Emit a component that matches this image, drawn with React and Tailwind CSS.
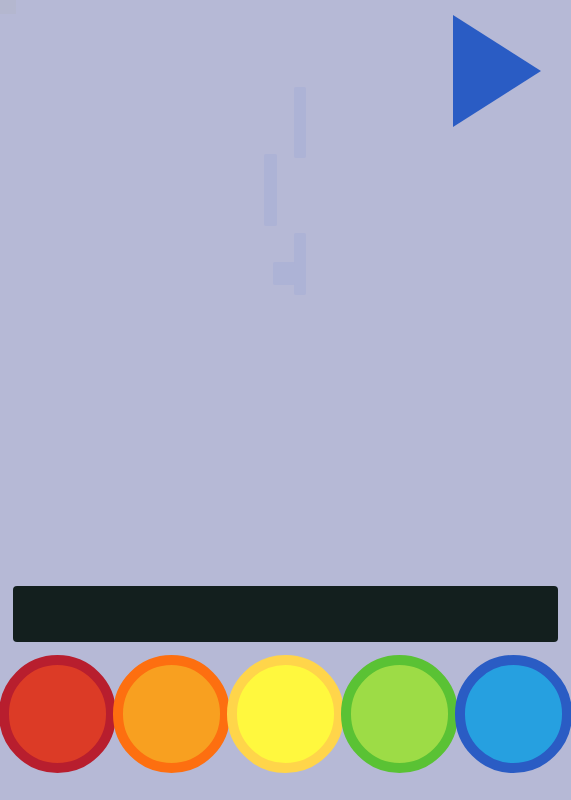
import React from "react";

const circles = [
  { border: "border-[#b81e2e]", fill: "bg-[#dc3b26]" },
  { border: "border-[#fd6f10]", fill: "bg-[#f8a020]" },
  { border: "border-[#ffd54a]", fill: "bg-[#fff83e]" },
  { border: "border-[#5ac234]", fill: "bg-[#9ddc46]" },
  { border: "border-[#2a5cc4]", fill: "bg-[#26a0e0]" },
];

export default function App() {
  return (
    <div className="h-[800px] w-full bg-[#b6b9d6] flex flex-col overflow-hidden" style={{ fontFamily: "'Liberation Sans', sans-serif" }}>
      <div className="relative h-[586px] flex justify-end pt-[15px] pr-[30px]">
        <div className="absolute left-0 top-0 w-[16px] h-[14px] bg-[#b4b7cf]" />
        <div className="absolute left-[294px] top-[87px] w-[12px] h-[71px] rounded-[2px] bg-[#adb3d6]" />
        <div className="absolute left-[264px] top-[154px] w-[13px] h-[72px] rounded-[2px] bg-[#adb3d6]" />
        <div className="absolute left-[294px] top-[233px] w-[12px] h-[62px] rounded-[2px] bg-[#adb3d6]" />
        <div className="absolute left-[273px] top-[262px] w-[22px] h-[23px] rounded-[2px] bg-[#adb3d6]" />
        <svg width="88" height="112" viewBox="0 0 88 112" className="block">
          <polygon points="0,0 88,56 0,112" fill="#2a5cc4" />
        </svg>
      </div>
      <div className="mx-[13px] h-[56px] rounded-[4px] bg-[#131f1e]" />
      <div className="grid grid-cols-5 mt-[13px]">
        {circles.map((c, i) => (
          <div key={i} className="flex justify-center">
            <div className={`shrink-0 w-[117px] h-[118px] rounded-full border-[10px] ${c.border} ${c.fill}`} />
          </div>
        ))}
      </div>
    </div>
  );
}
